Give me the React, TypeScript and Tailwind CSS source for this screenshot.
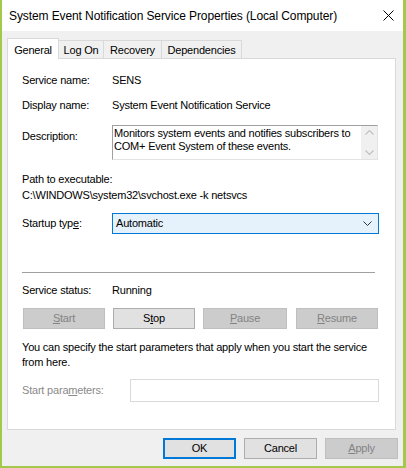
import React from "react"

// Windows 10 style service properties dialog

const FONT = { fontFamily: '"Liberation Sans", Arial, sans-serif' }

function Btn({
  children,
  w,
  disabled,
  focused,
}: {
  children: React.ReactNode
  w: string
  disabled?: boolean
  focused?: boolean
}) {
  const base = "h-[21px] flex items-center justify-center leading-none"
  if (disabled) {
    return (
      <div className={`${base} ${w} bg-[#cccccc] border border-[#bfbfbf] text-[#838383]`}>
        {children}
      </div>
    )
  }
  if (focused) {
    return (
      <div className={`${base} ${w} bg-[#e1e1e1] border-2 border-[#0078d7] text-black`}>
        {children}
      </div>
    )
  }
  return (
    <div className={`${base} ${w} bg-[#e1e1e1] border border-[#adadad] text-black`}>
      {children}
    </div>
  )
}

function Row({ label, value }: { label: string; value: string }) {
  return (
    <div className="flex leading-[15px]">
      <div className="w-[90px]">{label}</div>
      <div>{value}</div>
    </div>
  )
}

export default function App() {
  return (
    <div
      className="w-[406px] h-[468px] flex flex-col bg-[#f0f0f0] border-l-2 border-r-[3px] border-b-2 border-[#a3c94a] text-[11px] tracking-[-0.2px] text-black select-none"
      style={FONT}
    >
      {/* title bar */}
      <div className="h-[31px] bg-white flex items-center pl-[7px] pr-[8px] shrink-0">
        <div className="flex-1 text-[12px] tracking-[-0.1px]">
          System Event Notification Service Properties (Local Computer)
        </div>
        <svg width="11" height="11" viewBox="0 0 11 11" className="mr-[1px]">
          <path d="M0.5 0.5 L10.5 10.5 M10.5 0.5 L0.5 10.5" stroke="#000" strokeWidth="1" />
        </svg>
      </div>

      {/* tabs */}
      <div className="flex items-end pl-[5px] mt-[7px] h-[20px] shrink-0">
        <div className="relative z-10 w-[52px] h-[21px] -mb-[1px] bg-white border border-b-0 border-[#d9d9d9] flex items-start justify-center pt-[3px]">
          General
        </div>
        <div className="w-[45px] h-[18px] border border-l-0 border-b-0 border-[#d9d9d9] flex items-center justify-center pt-[1px]">
          Log On
        </div>
        <div className="w-[58px] h-[18px] border border-l-0 border-b-0 border-[#d9d9d9] flex items-center justify-center pt-[1px]">
          Recovery
        </div>
        <div className="w-[80px] h-[18px] border border-l-0 border-b-0 border-[#d9d9d9] flex items-center justify-center pt-[1px]">
          Dependencies
        </div>
      </div>

      {/* panel */}
      <div className="ml-[5px] w-[389px] h-[372px] bg-white border border-[#d9d9d9] pl-[14px] pt-[14px] shrink-0">
        <Row label="Service name:" value="SENS" />
        <div className="mt-[10px]">
          <Row label="Display name:" value="System Event Notification Service" />
        </div>

        <div className="flex mt-[12px]">
          <div className="w-[90px] pt-[4px] leading-[15px]">Description:</div>
          <div className="w-[266px] h-[35px] flex border-t border-l border-[#a0a0a0] border-r border-b border-r-[#e3e3e3] border-b-[#e3e3e3]">
            <div className="flex-1 pl-[1px] pt-[1px] leading-[12.5px]">
              Monitors system events and notifies subscribers to
              <br />
              COM+ Event System of these events.
            </div>
            <div className="w-[16px] bg-[#f0f0f0] flex flex-col items-center justify-between py-[4px]">
              <svg width="9" height="5" viewBox="0 0 9 5">
                <path d="M0.5 4.5 L4.5 0.5 L8.5 4.5" fill="none" stroke="#c2c2c2" strokeWidth="1.2" />
              </svg>
              <svg width="9" height="5" viewBox="0 0 9 5">
                <path d="M0.5 0.5 L4.5 4.5 L8.5 0.5" fill="none" stroke="#c2c2c2" strokeWidth="1.2" />
              </svg>
            </div>
          </div>
        </div>

        <div className="mt-[11px] leading-[16px]">
          <div>Path to executable:</div>
          <div>C:\WINDOWS\system32\svchost.exe -k netsvcs</div>
        </div>

        <div className="flex items-center mt-[10px]">
          <div className="w-[90px] leading-[15px]">
            Startup typ<span className="underline">e</span>:
          </div>
          <div className="w-[267px] h-[21px] bg-[#e5f1fb] border border-[#0078d7] flex items-center pl-[3px] pr-[6px]">
            <div className="flex-1">Automatic</div>
            <svg width="9" height="5" viewBox="0 0 9 5">
              <path d="M0.5 0.5 L4.5 4.5 L8.5 0.5" fill="none" stroke="#333" strokeWidth="1" />
            </svg>
          </div>
        </div>

        <div className="mt-[38px] w-[353px] h-px bg-[#a0a0a0]" />

        <div className="mt-[10px]">
          <Row label="Service status:" value="Running" />
        </div>

        <div className="flex mt-[10px] ml-[1px]">
          <Btn w="w-[82px]" disabled>
            <span className="underline">S</span>tart
          </Btn>
          <div className="ml-[8px]">
            <Btn w="w-[82px]">
              S<span className="underline">t</span>op
            </Btn>
          </div>
          <div className="ml-[8px]">
            <Btn w="w-[84px]" disabled>
              <span className="underline">P</span>ause
            </Btn>
          </div>
          <div className="ml-[9px]">
            <Btn w="w-[82px]" disabled>
              <span className="underline">R</span>esume
            </Btn>
          </div>
        </div>

        <div className="mt-[11px] leading-[15px] whitespace-nowrap">
          You can specify the start parameters that apply when you start the service
          <br />
          from here.
        </div>

        <div className="flex items-center mt-[9px]">
          <div className="w-[108px] text-[#8a8a8a]">
            Start para<span className="underline">m</span>eters:
          </div>
          <div className="w-[249px] h-[23px] border border-[#d9d9d9] bg-white" />
        </div>
      </div>

      {/* bottom buttons */}
      <div className="flex justify-end gap-[8px] pr-[5px] mt-[8px]">
        <Btn w="w-[73px]" focused>
          OK
        </Btn>
        <Btn w="w-[73px]">Cancel</Btn>
        <Btn w="w-[73px]" disabled>
          <span className="underline">A</span>pply
        </Btn>
      </div>
    </div>
  )
}
